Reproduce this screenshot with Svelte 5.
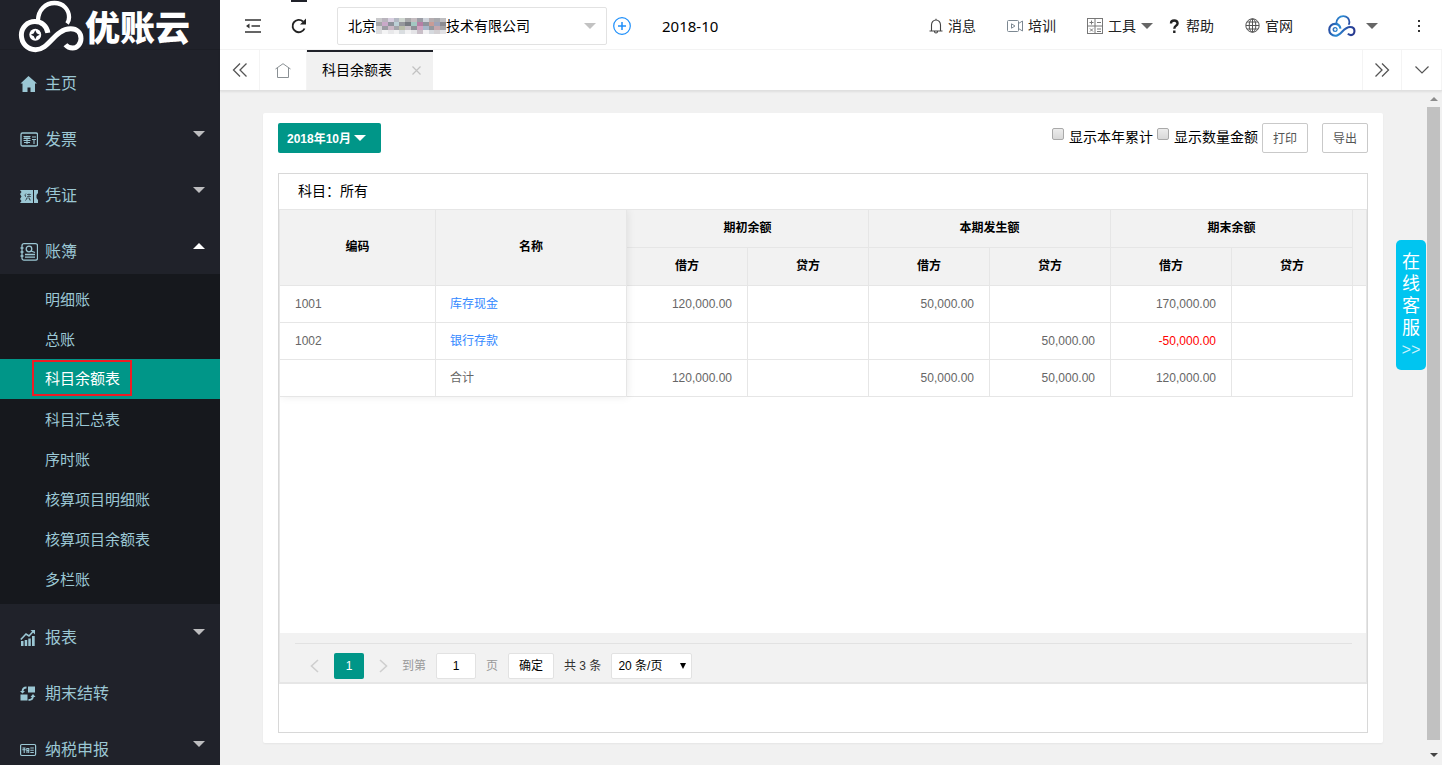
<script lang="ts">
	interface MenuItem {
		icon: string;
		label: string;
		open?: boolean;
		group?: boolean;
		children?: string[];
	}

	const menu: MenuItem[] = [
		{ icon: 'home', label: '主页' },
		{ icon: 'invoice', label: '发票', group: true },
		{ icon: 'voucher', label: '凭证', group: true },
		{
			icon: 'book',
			label: '账簿',
			group: true,
			open: true,
			children: [
				'明细账',
				'总账',
				'科目余额表',
				'科目汇总表',
				'序时账',
				'核算项目明细账',
				'核算项目余额表',
				'多栏账'
			]
		},
		{ icon: 'chart', label: '报表', group: true },
		{ icon: 'carry', label: '期末结转' },
		{ icon: 'tax', label: '纳税申报', group: true }
	];

	const groups = ['期初余额', '本期发生额', '期末余额'];

	const rows = [
		{ code: '1001', name: '库存现金', link: true, values: ['120,000.00', '', '50,000.00', '', '170,000.00', ''] },
		{ code: '1002', name: '银行存款', link: true, values: ['', '', '', '50,000.00', '-50,000.00', ''] },
		{ code: '', name: '合计', link: false, values: ['120,000.00', '', '50,000.00', '50,000.00', '120,000.00', ''] }
	];

	// Masked part of the company name, one colour per block
	const mask = [
		['#c9c9cb', '#b9b4bd', '#d8cfe0', '#b4b9c4', '#cfd6d0', '#a9a9ab', '#c4bcc0', '#9c9ea6', '#cfd3da', '#b5adb0', '#a8a9ad', '#bfbfc2'],
		['#a5a5a8', '#c9a9c8', '#8e929b', '#bcd0d6', '#96979c', '#777a80', '#a3c8c2', '#b77fa6', '#8f949c', '#c89c96', '#9da3b8', '#8b8b90'],
		['#d3d3d5', '#9b9ba2', '#cbb8c6', '#a4a5ab', '#b9bda9', '#c7c0c6', '#8d9097', '#d0a3c0', '#a7b6c9', '#94979c', '#c4a7ad', '#a6a6a9'],
		['#dedee0', '#f4f4f5', '#e8e8ea', '#f2f2f3', '#d9dde0', '#f1f1f2', '#e4e4e7', '#c9bfc8', '#f1f1f3', '#d5d9de', '#d3d0d3', '#e2e2e6']
	];

	let activeItem = $state('科目余额表');
	let showYear = $state(false);
	let showAmount = $state(false);
	let page = $state('1');
	let pageSize = $state('20');
</script>

{#snippet cloud(color: string, hole: string)}
	<svg class="cloud" viewBox="54 0 200 160" fill="none" stroke={color} aria-hidden="true">
		<defs>
			<linearGradient id="cloud-blue" gradientUnits="userSpaceOnUse" x1="56" y1="60" x2="250" y2="110">
				<stop offset="0" stop-color="#263f98" />
				<stop offset="0.4" stop-color="#2b8ed6" />
				<stop offset="0.7" stop-color="#2a52a8" />
				<stop offset="1" stop-color="#27358c" />
			</linearGradient>
		</defs>
		<path
			stroke-width="15"
			d="M143 99C140 78 124 65 104 65C81 65 63 83 63 106C63 131 82 150 106 150C148 150 162 88 212 87C231 87 243 99 243 116C243 133 231 145 218 145C208 145 201 141 196 135"
		/>
		<path stroke-width="13" d="M113 62C114 30 136 9 163 9C190 9 207 30 207 52C207 60 205 66 201 71" />
		<circle cx="105" cy="105" r="18" fill={color} stroke="none" />
		<path d="M105 96l3 6 6 3-6 3-3 6-3-6-6-3 6-3z" fill={hole} stroke={hole} stroke-width="4" />
	</svg>
{/snippet}

{#snippet menuIcon(name: string)}
	<svg class="menu-icon" viewBox="0 0 18 18" fill="none" stroke="currentColor" aria-hidden="true">
		{#if name === 'home'}
			<path d="M8.500 1L17 8.500h-2V17h-4.500v-4.500H7.500V17H2.500V8.500H0.500z" fill="currentColor" stroke="none" />
		{:else if name === 'invoice'}
			<rect x="1" y="2" width="16.500" height="13" rx="1.500" stroke-width="1.300" />
			<path d="M3.500 5.500h7M3.500 7.500h7M3.500 9.500h7M4 11.500h6M7 5v8M5 5v3M9 5v3M12 6h4M12 8.500h4M14 9v4" stroke-width="1.100" />
		{:else if name === 'voucher'}
			<path d="M0 3h13v13H0l1.500-2L0 12l1.500-2.500L0 7l1.500-2zM14 3h4v3l-1.500 2v3L18 13v3h-4z" fill="currentColor" stroke="none" />
			<path d="M6 6.500L4.500 8.500M5.500 8v2M7 7.500h4M9 6.500v3M7 9.500h4M6.500 11v1.500L5 13.500M6.500 11h3v2H11" stroke="#20222a" stroke-width="0.600" />
		{:else if name === 'book'}
			<rect x="2" y="0.700" width="15.500" height="16.500" rx="2" stroke-width="1.300" />
			<circle cx="9" cy="6" r="2.800" stroke-width="1.300" />
			<path d="M11 8l4 1.500M5 11.500h10M5 14.200h10M0.500 5h3M0.500 9h3M0.500 13h3" stroke-width="1.300" />
		{:else if name === 'chart'}
			<path d="M1 12h2.500v5H1zM4.700 11h2.500v6H4.700zM8.300 9.500h2.500V17H8.300zM12 7h2.700v10H12z" fill="currentColor" stroke="none" />
			<path d="M0.800 10.500L6 5l3 2 5-5.500" stroke-width="1.600" />
			<path d="M10.500 1H15v4.500z" fill="currentColor" stroke="none" />
		{:else if name === 'carry'}
			<path d="M8 1.500h7v6H8zM0.500 9.500h7v6h-7z" fill="currentColor" stroke="none" />
			<path d="M6.500 2.500Q2.500 2.500 2.500 6.500M8.500 15Q13 15 13 11" stroke-width="1.800" />
			<path d="M0 6h5L2.500 8.500zM10.500 12h5L13 9z" fill="currentColor" stroke="none" />
		{:else}
			<rect x="0.600" y="3.500" width="15" height="11" rx="1.200" stroke-width="1.200" />
			<path d="M2.500 7h3M2.300 8.800h3.500M4.200 6.500v5.500M6.800 7.500h2v2h-2zM7 9.500v2.500M8.700 9.500v2.500M10.300 7h3.500M10.300 9.200h3.500M10.300 11.500h3.500" stroke-width="1.100" />
		{/if}
	</svg>
{/snippet}

<div class="app">
	<aside class="sidebar">
		<div class="logo">
			{@render cloud('#fff', '#20222a')}
			<span class="logo-text">优账云</span>
		</div>
		<nav class="menu">
			{#each menu as item (item.label)}
				<div class="menu-group">
					<button class="menu-item" type="button">
						{@render menuIcon(item.icon)}
						<span>{item.label}</span>
						{#if item.group}
							<i class="caret menu-caret" class:up={item.open}></i>
						{/if}
					</button>
					{#if item.open && item.children}
						<div class="submenu">
							{#each item.children as child (child)}
								<button
									class="submenu-item"
									class:active={child === activeItem}
									type="button"
									onclick={() => (activeItem = child)}
								>
									<span>{child}</span>
								</button>
							{/each}
						</div>
					{/if}
				</div>
			{/each}
		</nav>
	</aside>

	<div class="main">
		<header class="topbar">
			<button class="top-tool" type="button" aria-label="收起菜单">
				<svg width="16" height="14" viewBox="0 0 16 14" stroke="#333" stroke-width="1.600" fill="none">
					<path d="M0 1h16M6.500 7H15M0 13h16" />
					<path d="M1 7l3.500-2.500v5z" fill="#333" stroke="none" />
				</svg>
			</button>
			<button class="top-tool hovered" type="button" aria-label="刷新">
				<svg width="16" height="16" viewBox="0 0 16 16" fill="none" stroke="#222" stroke-width="1.900">
					<path d="M13.500 10.500A6.200 6.200 0 1 1 12 3.500" />
					<path d="M15 0.500v6H9z" fill="#222" stroke="none" />
				</svg>
			</button>
			<button class="company" type="button" aria-haspopup="listbox">
				<span>北京</span>
				<svg class="mask" viewBox="0 0 72 20" preserveAspectRatio="none" shape-rendering="crispEdges" aria-hidden="true">
					{#each mask as line, y}
						{#each line as fill, x}
							<rect x={x * 6} y={y * 5} width="6" height="5" {fill} />
						{/each}
					{/each}
				</svg>
				<span>技术有限公司</span>
				<i class="caret light"></i>
			</button>
			<button class="add" type="button" aria-label="添加">
				<svg width="18" height="18" viewBox="0 0 18 18" fill="none" stroke="#1e8ffa" stroke-width="1.200">
					<circle cx="9" cy="9" r="8.300" />
					<path d="M9 5v8M5 9h8" stroke-width="1.500" />
				</svg>
			</button>
			<span class="period">2018-10</span>

			<nav class="links">
				<a href="#message">
					<svg width="14" height="16" viewBox="0 0 14 16" fill="none" stroke="#444" stroke-width="1.100">
						<path d="M0.500 13h13M2.500 13V7a4.500 5 0 0 1 9 0v6M7 2V0.800M5.500 13.500q0 1.500 1.500 1.500t1.500-1.500" />
					</svg>
					消息
				</a>
				<a href="#training">
					<svg width="16" height="14" viewBox="0 0 16 14" fill="none" stroke="#7c8892">
						<rect x="0.500" y="1.500" width="11" height="11" rx="1" />
						<path d="M11.500 4.500L15.500 2v10l-4-2.500M4.500 4.800v4.400L8 7z" />
					</svg>
					培训
				</a>
				<a class="has-caret" href="#tools">
					<svg width="16" height="16" viewBox="0 0 16 16" fill="none" stroke="#777">
						<rect x="0.500" y="0.500" width="15" height="15" />
						<path d="M8 0v16M0 8h16M2.500 4.500h4M4.500 2.500v4M10 4.500h4M3 10.500l3 3M6 10.500l-3 3M10 11h4M10 13.500h4" />
					</svg>
					工具
					<i class="caret"></i>
				</a>
				<a href="#help">
					<svg class="help-icon" width="11" height="14" viewBox="0 0 11 14" fill="none" stroke="#222" stroke-width="2.400">
						<path d="M2 4.500Q2 1.500 5.200 1.500T8.600 4.300Q8.600 5.800 7 6.800T5.300 9.800M5.300 11.400V14" />
					</svg>
					帮助
				</a>
				<a href="#site">
					<svg width="15" height="15" viewBox="0 0 15 15" fill="none" stroke="#555">
						<circle cx="7.500" cy="7.500" r="6.700" />
						<ellipse cx="7.500" cy="7.500" rx="3.300" ry="6.700" />
						<path d="M7.500 1v13M1 7.500h13M2 4h11M2 11h11" />
					</svg>
					官网
				</a>
				<a class="account" href="#account" aria-label="账户">
					{@render cloud('url(#cloud-blue)', '#fff')}
					<i class="caret"></i>
				</a>
				<button class="more" type="button" aria-label="更多">
					<svg width="4" height="14" viewBox="0 0 4 14" fill="#333">
						<path d="M1 1h2v2H1zM1 6h2v2H1zM1 11h2v2H1z" />
					</svg>
				</button>
			</nav>
		</header>

		<div class="tabs">
			<button class="tab-tool" type="button" aria-label="向左">
				<svg width="16" height="14" viewBox="0 0 16 14" fill="none" stroke="#555" stroke-width="1.300">
					<path d="M8 0.500L1.500 7 8 13.500M14.500 0.500L8 7l6.500 6.500" />
				</svg>
			</button>
			<button class="tab-home" type="button" aria-label="主页">
				<svg width="16" height="15" viewBox="0 0 16 15" fill="none" stroke="#8a9094">
					<path d="M0.500 6L8 0.700 15.500 6M2.500 5v9.500h11V5" />
				</svg>
			</button>
			<div class="tab">
				<span>科目余额表</span>
				<button class="tab-close" type="button" aria-label="关闭">
					<svg width="9" height="9" viewBox="0 0 9 9" stroke="#c2c2c2" stroke-width="1.200">
						<path d="M0.500 0.500l8 8M8.500 0.500l-8 8" />
					</svg>
				</button>
			</div>
			<button class="tab-tool right" type="button" aria-label="向右">
				<svg width="16" height="14" viewBox="0 0 16 14" fill="none" stroke="#555" stroke-width="1.300">
					<path d="M1.500 0.500L8 7l-6.500 6.500M8 0.500L14.500 7 8 13.500" />
				</svg>
			</button>
			<button class="tab-tool" type="button" aria-label="展开">
				<svg width="14" height="8" viewBox="0 0 14 8" fill="none" stroke="#555" stroke-width="1.200">
					<path d="M0.500 0.500L7 7l6.500-6.500" />
				</svg>
			</button>
		</div>

		<div class="body">
			<main class="content">
				<section class="card">
					<div class="toolbar">
						<button class="month" type="button">2018年10月<i class="caret"></i></button>
						<div class="options">
							<label><input type="checkbox" bind:checked={showYear} />显示本年累计</label>
							<label><input type="checkbox" bind:checked={showAmount} />显示数量金额</label>
						</div>
						<button class="plain" type="button">打印</button>
						<button class="plain export" type="button">导出</button>
					</div>

					<div class="report">
						<div class="report-title">科目：所有</div>
						<div class="table-view">
							<div class="table-wrap">
								<table>
									<colgroup>
										<col class="col-code" />
										<col class="col-name" />
										<col span="6" />
										<col class="col-patch" />
									</colgroup>
									<thead>
										<tr>
											<th rowspan="2">编码</th>
											<th rowspan="2">名称</th>
											{#each groups as group (group)}
												<th colspan="2">{group}</th>
											{/each}
											<th class="patch" rowspan="2"></th>
										</tr>
										<tr>
											{#each groups as group (group)}
												<th>借方</th>
												<th>贷方</th>
											{/each}
										</tr>
									</thead>
									<tbody>
										{#each rows as row}
											<tr>
												<td>{row.code}</td>
												<td>
													{#if row.link}
														<a href="#detail">{row.name}</a>
													{:else}
														{row.name}
													{/if}
												</td>
												{#each row.values as value}
													<td class="number" class:negative={value.startsWith('-')}>{value}</td>
												{/each}
												<td class="patch"></td>
											</tr>
										{/each}
									</tbody>
								</table>
							</div>
							<div class="table-page">
								<div class="pager">
									<button class="arrow" type="button" aria-label="上一页">
										<svg width="9" height="14" viewBox="0 0 9 14" fill="none" stroke="#cfcfcf" stroke-width="1.600">
											<path d="M8 1L1.500 7 8 13" />
										</svg>
									</button>
									<button class="current" type="button">1</button>
									<button class="arrow" type="button" aria-label="下一页">
										<svg width="9" height="14" viewBox="0 0 9 14" fill="none" stroke="#cfcfcf" stroke-width="1.600">
											<path d="M1 1l6.500 6L1 13" />
										</svg>
									</button>
									<label class="jump">到第<input type="text" bind:value={page} />页</label>
									<button class="confirm" type="button">确定</button>
									<span>共 3 条</span>
									<span class="select-box">
										<select bind:value={pageSize} aria-label="每页条数">
											<option value="20">20 条/页</option>
											<option value="50">50 条/页</option>
											<option value="100">100 条/页</option>
										</select>
									</span>
								</div>
							</div>
						</div>
					</div>
				</section>
			</main>
			<div class="scrollbar" aria-hidden="true">
				<i class="scroll-arrow"></i>
				<div class="thumb"></div>
				<i class="scroll-arrow down"></i>
			</div>
		</div>
	</div>

	<a class="service" href="#service">
		<span>在</span><span>线</span><span>客</span><span>服</span>
		<small>&gt;&gt;</small>
	</a>
</div>

<style>
	:global(body) {
		margin: 0;
		overflow: hidden;
	}

	.app {
		display: flex;
		height: 100vh;
		background: #f1f1f1;
		color: #000;
		font: 14px/20px 'Liberation Sans', 'Noto Sans CJK SC', sans-serif;
	}

	.app * {
		box-sizing: border-box;
	}

	button,
	input,
	select {
		margin: 0;
		padding: 0;
		border: 0;
		background: none;
		color: inherit;
		font: inherit;
	}

	button {
		cursor: pointer;
	}

	a {
		color: inherit;
		text-decoration: none;
	}

	svg {
		flex: none;
		display: block;
	}

	.caret {
		flex: none;
		border: 6px solid transparent;
		border-top-color: #666;
		border-bottom: 0;
	}

	/* Sidebar */
	.sidebar {
		flex: none;
		width: 220px;
		overflow: hidden;
		background: #20222a;
		color: #9bc7d4;
	}

	.logo {
		display: flex;
		align-items: center;
		height: 50px;
		padding: 4px 0 0 18px;
		border-bottom: 1px solid #1c1e25;
		color: #fff;
	}

	.logo .cloud {
		width: 67px;
		height: 53px;
	}

	.logo-text {
		padding-top: 4px;
		font-size: 35px;
		font-weight: 900;
		line-height: 48px;
		white-space: nowrap;
	}

	.menu {
		display: flex;
		flex-direction: column;
		gap: 10px;
		padding-top: 10px;
	}

	.menu-item {
		display: flex;
		align-items: center;
		gap: 7px;
		width: 100%;
		height: 46px;
		padding: 2px 15px 0 20px;
		font-size: 16px;
	}

	.menu-icon {
		width: 18px;
		height: 18px;
	}

	.menu-caret {
		margin: 0 0 12px auto;
		border-top-color: #bdbdbf;
	}

	.menu-caret.up {
		border-top: 0;
		border-bottom: 6px solid #fff;
	}

	.submenu {
		padding: 5px 0;
		background: #16181d;
	}

	.submenu-item {
		display: flex;
		align-items: center;
		width: 100%;
		height: 40px;
		padding: 2px 0 0 45px;
		font-size: 15px;
	}

	.submenu-item.active {
		padding: 0 0 2px 32px;
		background: #009688;
		color: #fff;
	}

	.submenu-item.active span {
		padding: 2px 10px 0 11px;
		border: 2px solid #ed1c24;
		line-height: 30px;
	}

	/* Top bar */
	.main {
		flex: 1;
		display: flex;
		flex-direction: column;
		min-width: 0;
	}

	.topbar {
		flex: none;
		display: flex;
		align-items: center;
		height: 50px;
		padding: 2px 0 0 10px;
		border-bottom: 1px solid #f4f4f4;
		background: #fff;
		white-space: nowrap;
	}

	.top-tool {
		position: relative;
		display: grid;
		place-items: center;
		width: 46px;
		height: 48px;
	}

	.top-tool.hovered::before {
		content: '';
		position: absolute;
		top: -2px;
		left: 15px;
		width: 16px;
		height: 2px;
		background: #20222a;
	}

	.company {
		display: flex;
		align-items: center;
		width: 270px;
		height: 38px;
		margin-left: 15px;
		padding: 0 10px;
		border: 1px solid #e2e2e2;
		border-radius: 2px;
	}

	.company .mask {
		width: 70px;
		height: 16px;
	}

	.company .caret {
		margin-left: auto;
	}

	.caret.light {
		border-top-color: #c2c2c2;
	}

	.add {
		margin: 0 31px 0 6px;
	}

	.period {
		font-family: 'Noto Sans', sans-serif;
		font-size: 15px;
	}

	.links {
		display: flex;
		align-items: center;
		margin-left: auto;
		color: #222;
	}

	.links a {
		display: flex;
		align-items: center;
		gap: 5px;
		padding: 0 15px 0 16px;
	}

	.links .has-caret {
		padding-right: 0;
	}

	.help-icon {
		margin-right: 1px;
	}

	.links .account {
		gap: 10px;
		padding: 0 34px 0 20px;
	}

	.account .cloud {
		width: 28px;
		height: 24px;
	}

	.more {
		padding: 5px 21px 5px 5px;
	}

	/* Page tabs */
	.tabs {
		flex: none;
		display: flex;
		height: 41px;
		border-bottom: 1px solid #e0e0e0;
		background: #fff;
		box-shadow: 0 1px 2px rgba(0, 0, 0, 0.08);
	}

	.tab-tool,
	.tab-home {
		display: grid;
		place-items: center;
		width: 40px;
		border-right: 1px solid #f4f4f4;
	}

	.tab-home {
		width: 47px;
	}

	.tab-tool.right {
		margin-left: auto;
		border-left: 1px solid #f4f4f4;
	}

	.tab {
		display: flex;
		align-items: center;
		gap: 20px;
		padding: 0 12px 2px 15px;
		border-top: 2px solid #20222a;
		background: #f1f1f1;
	}

	/* Report */
	.body {
		flex: 1;
		display: flex;
		min-height: 0;
	}

	.content {
		flex: 1;
		min-width: 0;
		padding: 22px 42px 22px 43px;
	}

	.card {
		display: flex;
		flex-direction: column;
		height: 100%;
		padding: 10px 15px;
		border-radius: 2px;
		background: #fff;
		box-shadow: 0 1px 2px rgba(0, 0, 0, 0.05);
	}

	.toolbar {
		display: flex;
		align-items: center;
		margin-bottom: 20px;
	}

	.month {
		display: flex;
		align-items: center;
		gap: 3px;
		height: 30px;
		padding: 2px 15px 0 9px;
		border-radius: 2px;
		background: #009688;
		color: #fff;
		font-size: 12px;
		font-weight: bold;
	}

	.month .caret {
		margin-bottom: 2px;
		border-top-color: #fff;
	}

	.options {
		display: flex;
		gap: 4px;
		margin: 0 4px 2px auto;
	}

	.options label {
		display: flex;
		align-items: center;
		gap: 5px;
	}

	.options input {
		appearance: none;
		width: 12px;
		height: 12px;
		margin-bottom: 6px;
		border: 1px solid #a9a9a9;
		border-radius: 2px;
		background: linear-gradient(#ececec, #d8d8d8);
	}

	.options input:checked {
		background: #009688;
	}

	.plain {
		width: 46px;
		height: 30px;
		padding-top: 2px;
		border: 1px solid #c9c9c9;
		border-radius: 2px;
		color: #555;
		font-size: 12px;
	}

	.export {
		margin-left: 14px;
	}

	.report {
		flex: 1;
		display: flex;
		flex-direction: column;
		padding-bottom: 48px;
		border: 1px solid #d8d8d8;
	}

	.report-title {
		padding: 7px 19px 8px;
	}

	.table-view {
		flex: 1;
		display: flex;
		flex-direction: column;
		border: 1px solid #e6e6e6;
		border-bottom-width: 2px;
		color: #666;
		font-size: 12px;
	}

	.table-wrap {
		position: relative;
	}

	.table-wrap::after {
		content: '';
		position: absolute;
		inset: 0 auto 0 0;
		width: 347px;
		box-shadow: 1px 0 8px rgba(0, 0, 0, 0.08);
		clip-path: inset(0 -10px -10px 0);
		pointer-events: none;
	}

	table {
		width: 100%;
		border-collapse: separate;
		border-spacing: 0;
		table-layout: fixed;
	}

	.col-code {
		width: 156px;
	}

	.col-name {
		width: 191px;
	}

	.col-patch {
		width: 13px;
	}

	th,
	td {
		height: 37px;
		padding: 0 15px;
		border-right: 1px solid #e6e6e6;
		border-bottom: 1px solid #e6e6e6;
		text-align: left;
	}

	th {
		height: 38px;
		padding-bottom: 2px;
		background: #f2f2f2;
		color: #000;
		text-align: center;
	}

	td:nth-child(2) {
		padding-left: 14px;
	}

	th.patch,
	td.patch {
		padding: 0;
		border-right: 0;
	}

	td.patch {
		border-bottom: 0;
	}

	td a {
		color: #3388ff;
	}

	.number {
		text-align: right;
	}

	.negative {
		color: #f00;
	}

	.table-page {
		margin-top: auto;
		padding: 10px 14px 3px 15px;
		background: #f2f2f2;
	}

	.pager {
		display: flex;
		align-items: center;
		gap: 10px;
		padding-top: 9px;
		border-top: 1px solid #e2e2e2;
		color: #333;
	}

	.pager .arrow {
		display: grid;
		place-items: center;
		width: 39px;
		height: 26px;
	}

	.pager .current {
		width: 30px;
		height: 26px;
		margin: 0 -10px;
		border-radius: 2px;
		background: #009688;
		color: #fff;
	}

	.jump {
		display: flex;
		align-items: center;
		gap: 10px;
		margin-left: -11px;
		color: #999;
	}

	.jump input {
		width: 40px;
		height: 26px;
		border: 1px solid #e2e2e2;
		border-radius: 2px;
		background: #fff;
		color: #000;
		text-align: center;
	}

	.confirm {
		width: 46px;
		height: 26px;
		border: 1px solid #e2e2e2;
		border-radius: 2px;
		background: #fff;
		color: #000;
	}

	.select-box {
		position: relative;
	}

	.select-box::after {
		content: '';
		position: absolute;
		top: 10px;
		right: 6px;
		border: 3px solid transparent;
		border-top: 6px solid #000;
		border-bottom: 0;
		pointer-events: none;
	}

	.select-box select {
		appearance: none;
		display: block;
		width: 81px;
		height: 26px;
		padding-left: 6px;
		border: 1px solid #e2e2e2;
		border-radius: 2px;
		background: #fff;
		color: #000;
	}

	/* Page scrollbar */
	.scrollbar {
		flex: none;
		display: flex;
		flex-direction: column;
		align-items: center;
		width: 17px;
		padding: 6px 0 8px;
	}

	.scroll-arrow {
		border: 4px solid transparent;
		border-top: 0;
		border-bottom-color: #8c8c8c;
	}

	.scroll-arrow.down {
		border-top: 4px solid #444;
		border-bottom: 0;
	}

	.thumb {
		flex: 1;
		width: 13px;
		margin: 6px 0 13px;
		background: #c1c1c1;
	}

	.service {
		position: fixed;
		top: 240px;
		right: 16px;
		display: flex;
		flex-direction: column;
		align-items: center;
		width: 30px;
		height: 130px;
		padding-top: 11px;
		border-radius: 5px;
		background: #00c5f0;
		color: #fff;
		font-size: 18px;
		line-height: 22px;
	}

	.service small {
		color: #c8f2fc;
		font-family: 'Liberation Mono', monospace;
		font-size: 16px;
		line-height: 24px;
	}
</style>
